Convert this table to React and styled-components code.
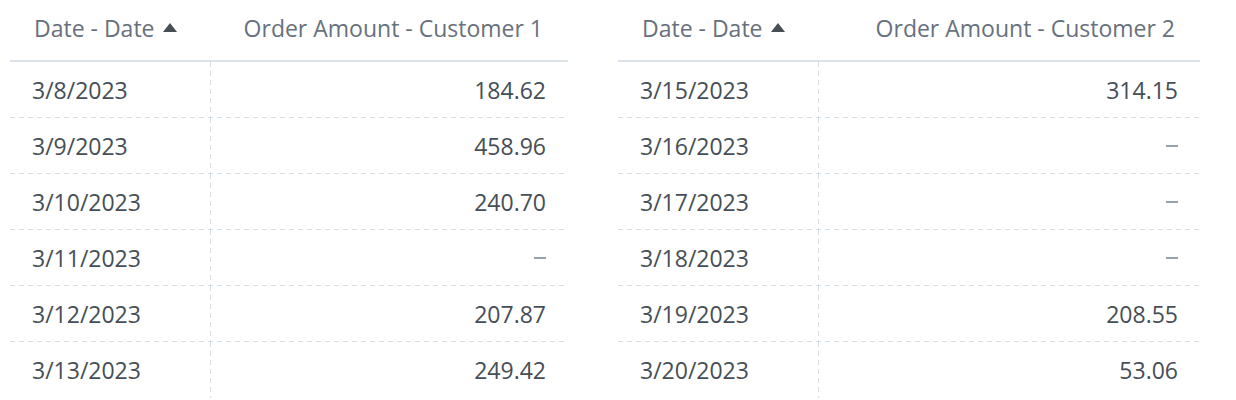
import React from 'react'
import styled, { createGlobalStyle } from 'styled-components'

const GlobalStyle = createGlobalStyle`
     body {
          margin: 0;
          background: #ffffff;
          font-family: "Open Sans", Lato, sans-serif;
     }
`

const tables = [
     {
          title: 'Order Amount - Customer 1',
          width: 558,
          rows: [
               ['3/8/2023', '184.62'],
               ['3/9/2023', '458.96'],
               ['3/10/2023', '240.70'],
               ['3/11/2023', null],
               ['3/12/2023', '207.87'],
               ['3/13/2023', '249.42'],
          ],
     },
     {
          title: 'Order Amount - Customer 2',
          width: 582,
          rows: [
               ['3/15/2023', '314.15'],
               ['3/16/2023', null],
               ['3/17/2023', null],
               ['3/18/2023', null],
               ['3/19/2023', '208.55'],
               ['3/20/2023', '53.06'],
          ],
     },
]

const SortArrow = () => (
     <svg width="14" height="9" viewBox="0 0 14 9">
          <path d="M7 0 L14 9 L0 9 Z" fill="#464e56" />
     </svg>
)

const Table = ({ title, width, rows }) => {
     return (
          <TableBox style={{ width }}>
               <HeaderRow>
                    <HeaderCell>
                         Date - Date
                         <SortArrow />
                    </HeaderCell>
                    <HeaderCell $right>{title}</HeaderCell>
               </HeaderRow>
               {rows.map(([date, amount], i) => (
                    <Row key={date} $last={i === rows.length - 1}>
                         <Cell $divider>{date}</Cell>
                         <Cell $right>{amount ?? <Empty />}</Cell>
                    </Row>
               ))}
          </TableBox>
     )
}

export default function App() {
     return (
          <>
               <GlobalStyle />
               <Page>
                    {tables.map((t) => (
                         <Table key={t.title} {...t} />
                    ))}
               </Page>
          </>
     )
}

const Page = styled.div`
     display: flex;
     gap: 50px;
     padding-left: 10px;
     height: 400px;
     overflow: hidden;
`

const TableBox = styled.div`
     display: flex;
     flex-direction: column;
     flex-shrink: 0;
`

const HeaderRow = styled.div`
     display: grid;
     grid-template-columns: 201px 1fr;
     height: 60px;
     border-bottom: 2px solid #dde3ea;
`

const HeaderCell = styled.div`
     display: flex;
     align-items: center;
     justify-content: ${(p) => (p.$right ? 'flex-end' : 'flex-start')};
     gap: 8px;
     padding: 0 25px 5px 24px;
     font-size: 23px;
     color: #67717c;
     white-space: nowrap;
`

const Row = styled.div`
     display: grid;
     grid-template-columns: 201px 1fr;
     height: 56px;
     background: ${(p) =>
          p.$last
               ? 'none'
               : 'linear-gradient(to right, #d5dde5 5px, transparent 5px) left bottom / 9px 1px repeat-x'};
`

const Cell = styled.div`
     display: flex;
     align-items: center;
     justify-content: ${(p) => (p.$right ? 'flex-end' : 'flex-start')};
     padding: 0 22px;
     font-size: 23px;
     color: #464e56;
     background: ${(p) =>
          p.$divider
               ? 'linear-gradient(to bottom, #d5dde5 5px, transparent 5px) right top / 1px 9px repeat-y'
               : 'none'};
`

const Empty = styled.span`
     display: block;
     width: 12px;
     height: 2px;
     background: #95a2ae;
`
